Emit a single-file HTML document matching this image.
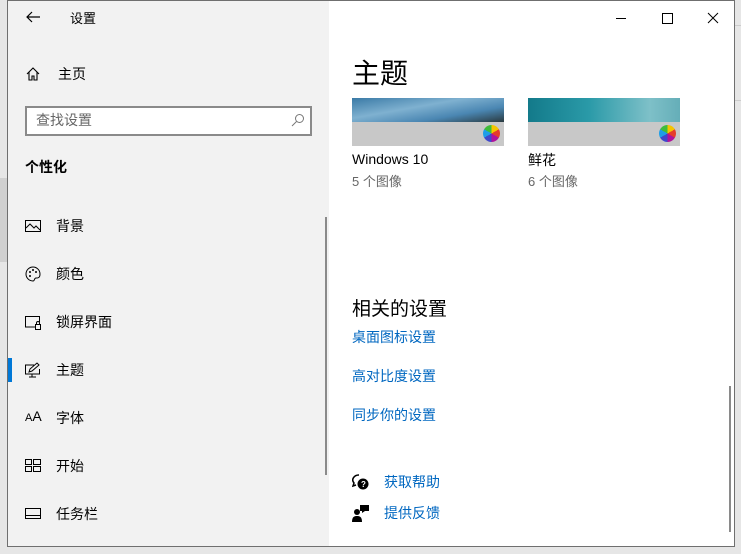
<!DOCTYPE html>
<html><head><meta charset="utf-8"><style>
*{margin:0;padding:0;box-sizing:border-box}
body{width:741px;height:554px;overflow:hidden;background:#e6e6e6;font-family:"Liberation Sans","Noto Sans CJK SC",sans-serif;position:relative}
.win{position:absolute;left:7px;top:0;width:728px;height:547px;border:1px solid #6f6f6f;background:#fff;overflow:hidden}
.side{position:absolute;left:0;top:0;width:321px;height:100%;background:#f2f2f2}
.t{position:absolute;font-size:14px;color:#000;white-space:nowrap}
.ic{position:absolute}
.link{position:absolute;font-size:14px;color:#0067c0;white-space:nowrap}
</style></head><body>
<div style="position:absolute;left:0;top:178px;width:7px;height:84px;background:#d0d0d0"></div>
<div style="position:absolute;left:735px;top:25px;width:6px;height:1px;background:#ccc"></div>
<div style="position:absolute;left:735px;top:100px;width:6px;height:1px;background:#ccc"></div>
<div class="win">
<div class="side">
<svg class="ic" style="left:17px;top:9px" width="16" height="14"><path d="M15 7H2M7 2L2 7l5 5" stroke="#000" stroke-width="1.2" fill="none"/></svg>
<div class="t" style="left:62px;top:7px;font-size:13px">设置</div>
<svg class="ic" style="left:18px;top:66px" width="14" height="14"><path d="M1 7L7 1l6 6M3 5v8h3V9h2v4h3V5" stroke="#000" stroke-width="1.1" fill="none"/></svg>
<div class="t" style="left:50px;top:63px">主页</div>
<div style="position:absolute;left:17px;top:105px;width:287px;height:30px;border:2px solid #8a8a8a;background:#fff"></div>
<div class="t" style="left:28px;top:109px;color:#666">查找设置</div>
<svg class="ic" style="left:283px;top:112px" width="14" height="14"><circle cx="8.5" cy="5.5" r="4" stroke="#777" fill="none"/><path d="M5.5 8.5L1 13" stroke="#777"/></svg>
<div class="t" style="left:17px;top:156px;font-weight:bold">个性化</div>
<svg class="ic" style="left:17px;top:219px" width="16" height="13"><rect x=".5" y=".5" width="15" height="11" stroke="#000" fill="none"/><path d="M1 8l4-4 4 4 2-2 4 4" stroke="#000" fill="none"/></svg>
<div class="t" style="left:48px;top:215px">背景</div>
<svg class="ic" style="left:17px;top:265px" width="16" height="16"><path d="M8 1a7 7 0 1 0 0 14c2 0 1-3 3-3s4 0 4-4A7 7 0 0 0 8 1z" stroke="#000" fill="none"/><circle cx="5" cy="6" r="1"/><circle cx="8" cy="4" r="1"/><circle cx="11" cy="6" r="1"/><circle cx="5" cy="10" r="1"/></svg>
<div class="t" style="left:48px;top:263px">颜色</div>
<svg class="ic" style="left:17px;top:315px" width="16" height="14"><path d="M10 11H.5V.5h14V6" stroke="#000" fill="none"/><rect x="10.5" y="8.5" width="5" height="5" stroke="#000" fill="none"/><path d="M11.5 8.5V7a1.5 1.5 0 0 1 3 0v1.5" stroke="#000" fill="none"/></svg>
<div class="t" style="left:48px;top:311px">锁屏界面</div>
<div style="position:absolute;left:0;top:357px;width:4px;height:24px;background:#0078d7"></div>
<svg class="ic" style="left:17px;top:361px" width="16" height="16"><path d="M9 3H.5v9h14V7M7 12v3M4 15h7" stroke="#000" fill="none"/><path d="M4 10l1-3 7-6 2 2-7 6z" stroke="#000" fill="none"/></svg>
<div class="t" style="left:48px;top:359px">主题</div>
<div class="t" style="left:17px;top:407px;font-size:11px">A<span style="font-size:14px">A</span></div>
<div class="t" style="left:48px;top:407px">字体</div>
<svg class="ic" style="left:17px;top:458px" width="16" height="14"><rect x=".5" y=".5" width="6" height="5" stroke="#000" fill="none"/><rect x="8.5" y=".5" width="7" height="5" stroke="#000" fill="none"/><rect x=".5" y="7.5" width="6" height="5" stroke="#000" fill="none"/><rect x="8.5" y="7.5" width="7" height="5" stroke="#000" fill="none"/></svg>
<div class="t" style="left:48px;top:455px">开始</div>
<svg class="ic" style="left:17px;top:507px" width="16" height="11"><rect x=".5" y=".5" width="15" height="10" stroke="#000" fill="none"/><path d="M1 7.5h14" stroke="#000"/></svg>
<div class="t" style="left:48px;top:503px">任务栏</div>
<div style="position:absolute;left:317px;top:216px;width:2px;height:258px;background:#8a8a8a"></div>
</div>
<svg class="ic" style="left:608px;top:10px" width="110" height="14"><path d="M0 7.5h10" stroke="#000"/><rect x="46.5" y="2.5" width="10" height="10" stroke="#000" fill="none"/><path d="M92 2l10 10M102 2L92 12" stroke="#000"/></svg>
<div class="t" style="left:344px;top:51px;font-size:28px">主题</div>
<div style="position:absolute;left:344px;top:97px;width:152px;height:24px;background:linear-gradient(170deg,#3a7aa6,#7fb1d0 40%,#4a86b2 70%,#2a3a40)"></div>
<div style="position:absolute;left:344px;top:121px;width:152px;height:24px;background:#c8c8c8"></div>
<div style="position:absolute;left:520px;top:97px;width:152px;height:24px;background:linear-gradient(90deg,#137a8a,#2a9aa8 40%,#7ec0c8 80%,#65aeb8)"></div>
<div style="position:absolute;left:520px;top:121px;width:152px;height:24px;background:#c8c8c8"></div>
<div style="position:absolute;left:475px;top:124px;width:17px;height:17px;border-radius:50%;background:conic-gradient(#f5c400 0 60deg,#e53b2c 60deg 120deg,#b0129b 120deg 180deg,#3f47cc 180deg 240deg,#1e9ee8 240deg 300deg,#3fbc3a 300deg)"></div>
<div style="position:absolute;left:651px;top:124px;width:17px;height:17px;border-radius:50%;background:conic-gradient(#f5c400 0 60deg,#e53b2c 60deg 120deg,#b0129b 120deg 180deg,#3f47cc 180deg 240deg,#1e9ee8 240deg 300deg,#3fbc3a 300deg)"></div>
<div class="t" style="left:344px;top:150px;font-size:14px">Windows 10</div>
<div class="t" style="left:344px;top:170px;color:#666;font-size:13px">5 个图像</div>
<div class="t" style="left:520px;top:149px">鲜花</div>
<div class="t" style="left:520px;top:170px;color:#666;font-size:13px">6 个图像</div>
<div class="t" style="left:344px;top:293px;font-size:19px">相关的设置</div>
<div class="link" style="left:344px;top:326px">桌面图标设置</div>
<div class="link" style="left:344px;top:365px">高对比度设置</div>
<div class="link" style="left:344px;top:404px">同步你的设置</div>
<svg class="ic" style="left:344px;top:473px" width="18" height="18"><path d="M7 1a6 5 0 0 0-5 8l-1 3 3-1" stroke="#000" stroke-width="1.5" fill="none"/><circle cx="11" cy="10" r="5.5"/><text x="9" y="13" font-size="8" fill="#fff" font-family="Liberation Sans" font-weight="bold">?</text></svg>
<div class="link" style="left:376px;top:471px">获取帮助</div>
<svg class="ic" style="left:344px;top:503px" width="18" height="18"><circle cx="5" cy="8" r="3"/><path d="M0 18c0-5 2-6 5-6s5 1 5 6z"/><path d="M8 1h9v6h-4l-3 2V7H8z"/></svg>
<div class="link" style="left:376px;top:502px">提供反馈</div>
<div style="position:absolute;left:721px;top:385px;width:2px;height:146px;background:#8a8a8a"></div>
</div>
</body></html>
